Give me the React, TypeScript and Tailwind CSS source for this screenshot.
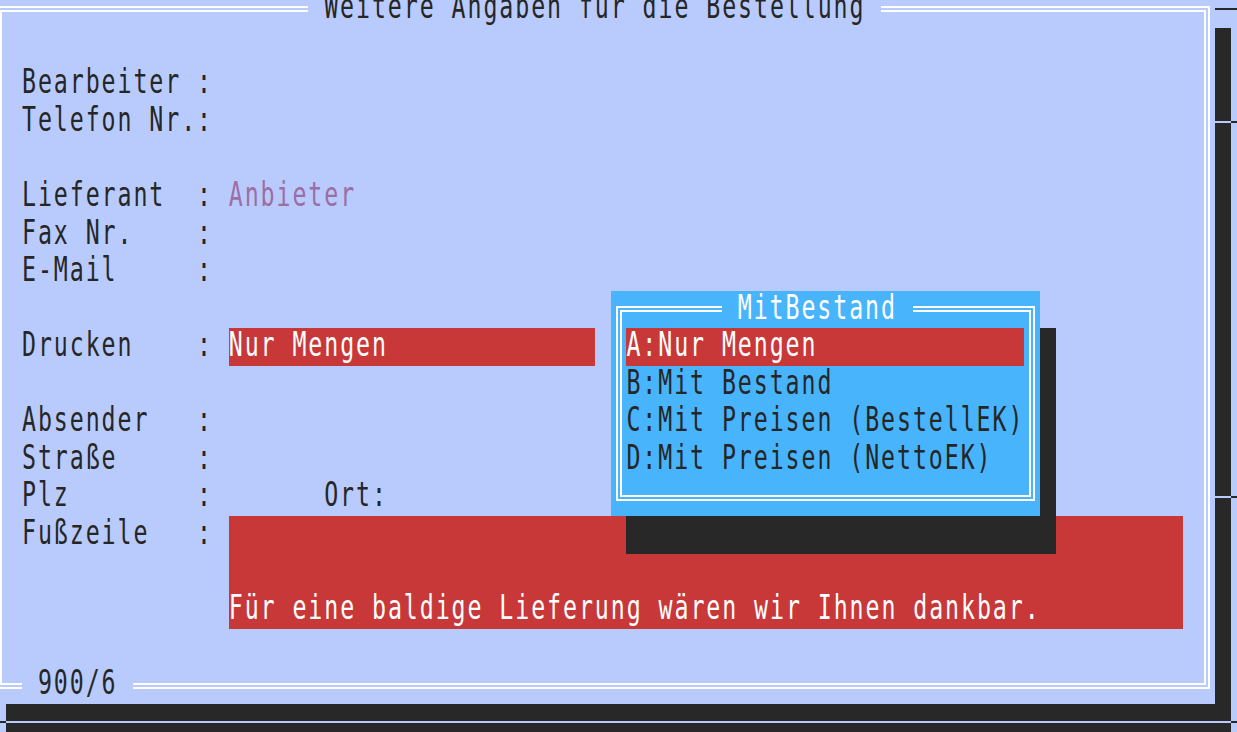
import type { ReactNode } from "react"

// one text cell, glyphs stretched tall like the old text-mode font
function T({ children }: { children: ReactNode }) {
  return (
    <span className="inline-block whitespace-pre origin-center scale-y-[1.41] -translate-y-[2px]">
      {children}
    </span>
  )
}

function Line({ color }: { color: string }) {
  return (
    <div className="flex h-full items-center">
      <div className={"h-[2px] w-full " + color}></div>
    </div>
  )
}

export default function App() {
  return (
    <div className="h-screen w-screen overflow-hidden bg-[#b9cbfd] text-[#262626] font-['DejaVu_Sans_Mono',monospace] text-[23.26px] tracking-[1.92px] leading-[37.55px]">
      <div className="ml-[-9.84px] mt-[-9.7px] grid grid-cols-[repeat(79,15.92px)] grid-rows-[repeat(20,37.55px)]">

        {/* lines of the screen behind */}
        <div className="col-start-78 col-end-80 row-start-1"><Line color="bg-[#282828]" /></div>
        <div className="col-start-79 row-start-4"><Line color="bg-[#282828]" /></div>
        <div className="col-start-79 row-start-14"><Line color="bg-[#282828]" /></div>
        <div className="col-start-1 row-start-20"><Line color="bg-[#282828]" /></div>
        <div className="col-start-79 row-start-20"><Line color="bg-[#282828]" /></div>

        {/* window shadow */}
        <div className="col-start-78 row-start-2 row-end-21 bg-[#282828]"></div>
        <div className="col-start-2 col-end-79 row-start-20 bg-[#282828]"></div>
        <div className="col-start-78 row-start-4"><Line color="bg-[#b9cbfd]" /></div>
        <div className="col-start-78 row-start-14"><Line color="bg-[#b9cbfd]" /></div>
        <div className="col-start-2 col-end-79 row-start-20"><Line color="bg-[#b9cbfd]" /></div>

        {/* window frame */}
        <div className="col-start-1 col-end-78 row-start-1 row-end-20 pl-[5.84px] pr-[5px] pt-[15.2px] pb-[14.75px]">
          <div className="h-full border-[6px] border-double border-white"></div>
        </div>

        <div className="col-start-21 col-end-57 row-start-1 bg-[#b9cbfd] pl-[15.92px]">
          <T>Weitere Angaben für die Bestellung</T>
        </div>
        <div className="col-start-3 col-end-10 row-start-19 bg-[#b9cbfd] pl-[15.92px]">
          <T>900/6</T>
        </div>

        {/* form */}
        <div className="col-start-3 col-end-16 row-start-3"><T>Bearbeiter :</T></div>
        <div className="col-start-3 col-end-16 row-start-4"><T>Telefon Nr.:</T></div>
        <div className="col-start-3 col-end-16 row-start-6"><T>Lieferant  :</T></div>
        <div className="col-start-16 col-end-39 row-start-6 text-[#9c6ea6]"><T>Anbieter</T></div>
        <div className="col-start-3 col-end-16 row-start-7"><T>Fax Nr.    :</T></div>
        <div className="col-start-3 col-end-16 row-start-8"><T>E-Mail     :</T></div>
        <div className="col-start-3 col-end-16 row-start-10"><T>Drucken    :</T></div>
        <div className="col-start-16 col-end-39 row-start-10 bg-[#c83838] text-white"><T>Nur Mengen</T></div>
        <div className="col-start-3 col-end-16 row-start-12"><T>Absender   :</T></div>
        <div className="col-start-3 col-end-16 row-start-13"><T>Straße     :</T></div>
        <div className="col-start-3 col-end-16 row-start-14"><T>Plz        :</T></div>
        <div className="col-start-22 col-end-30 row-start-14"><T>Ort:</T></div>
        <div className="col-start-3 col-end-16 row-start-15"><T>Fußzeile   :</T></div>
        <div className="col-start-16 col-end-76 row-start-15 row-end-18 flex flex-col justify-end bg-[#c83838] text-white">
          <div className="h-[37.55px]"><T>Für eine baldige Lieferung wären wir Ihnen dankbar.</T></div>
        </div>

        {/* popup */}
        <div className="col-start-41 col-end-68 row-start-10 row-end-16 bg-[#282828]"></div>
        <div className="col-start-40 col-end-67 row-start-9 row-end-15 bg-[#47b4fc] px-[5px] pt-[15.3px] pb-[15px]">
          <div className="h-full border-[6px] border-double border-white"></div>
        </div>
        <div className="col-start-47 col-end-59 row-start-9 bg-[#47b4fc] pl-[15.92px] text-white"><T>MitBestand</T></div>
        <div className="col-start-41 col-end-66 row-start-10 bg-[#c83838] text-white"><T>A:Nur Mengen</T></div>
        <div className="col-start-41 col-end-67 row-start-11"><T>B:Mit Bestand</T></div>
        <div className="col-start-41 col-end-67 row-start-12"><T>C:Mit Preisen (BestellEK)</T></div>
        <div className="col-start-41 col-end-67 row-start-13"><T>D:Mit Preisen (NettoEK)</T></div>
      </div>
    </div>
  )
}
